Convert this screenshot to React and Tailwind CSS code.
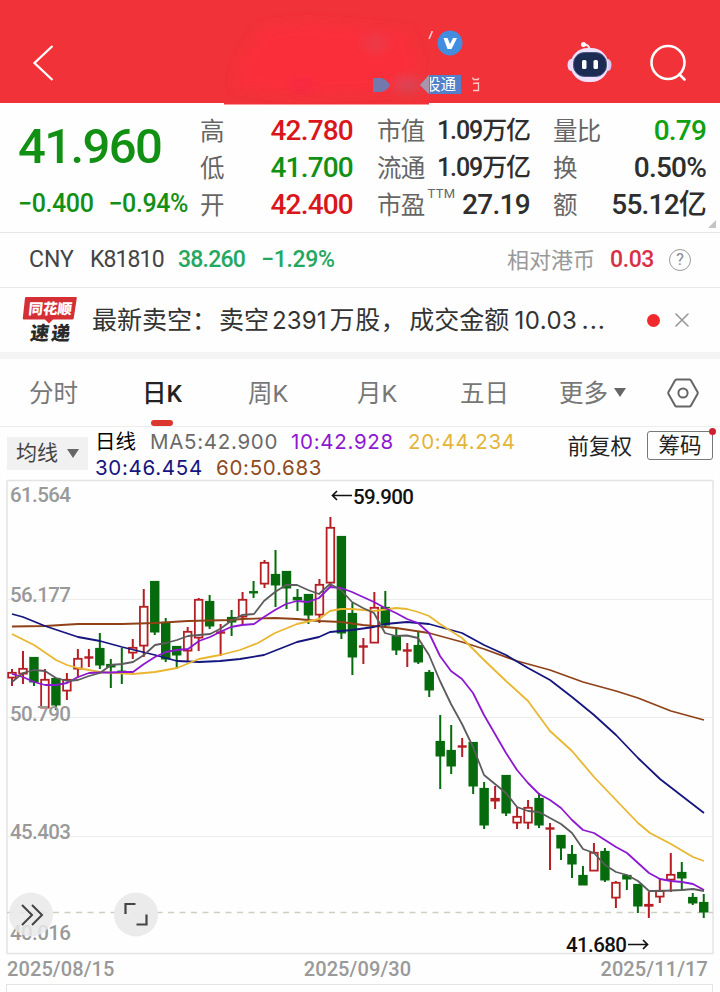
import { X } from 'lucide-react'

const UP = '#b51f24'
const DOWN = '#066b0c'

// one row per session: [rising, high, body top, body bottom, low]
const CANDLES = [
  [1, 669, 672, 678, 686], [1, 651, 668, 674, 684], [0, 657, 657, 682, 686], [1, 669, 679, 708, 708],
  [0, 678, 678, 705, 710], [1, 673, 679, 691, 700], [1, 649, 658, 669, 678], [1, 649, 657, 658, 667],
  [0, 633, 648, 665, 669], [0, 659, 664, 667, 688], [0, 648, 671, 672.5, 684], [1, 639, 647, 653, 659],
  [1, 589, 606, 646, 657], [0, 581, 581, 632, 635], [0, 618, 622, 659, 662], [0, 646, 646, 655, 669],
  [1, 627, 631, 651, 662], [1, 598, 599, 638, 651], [0, 595, 601, 626, 629], [1, 624, 632, 633, 656],
  [0, 610, 617, 622, 636], [1, 592, 599, 617, 625], [0, 581, 591.5, 593, 598], [1, 560, 562, 584, 588],
  [0, 550, 574, 585, 607], [0, 571, 571, 588, 609], [0, 589, 597, 600, 611], [0, 594, 594, 615, 624],
  [1, 579, 584, 615, 623], [1, 517, 527, 583, 588], [0, 536, 536, 633, 639], [0, 603, 613, 657, 675],
  [1, 638, 646, 647, 664], [1, 592, 607, 643, 643], [0, 591, 607, 625, 627], [0, 628, 636, 650, 655],
  [1, 643, 650, 651, 667], [0, 631, 645, 662, 664], [0, 670, 672, 690, 697], [0, 715, 741, 756, 789],
  [0, 725, 750, 766, 774], [1, 738, 746, 747, 757], [0, 742, 742, 786, 794], [0, 782, 788, 825, 829],
  [1, 786, 798, 801, 809], [0, 775, 775, 813, 816], [1, 807, 816, 823, 829], [1, 800, 807, 823, 829],
  [0, 793, 798, 825, 828], [1, 823, 828, 829, 870], [0, 835, 835, 848, 860], [0, 845, 854, 864, 878],
  [0, 866, 875, 885, 885], [1, 843, 852, 871, 871], [0, 848, 851, 880, 882], [1, 881, 882, 898, 908],
  [0, 875, 875, 879, 890], [0, 884, 884, 906, 913], [1, 892, 904, 906, 918], [1, 879, 890, 897, 903],
  [1, 853, 874, 880, 892], [0, 862, 872, 878, 890], [0, 893, 897, 903, 905], [0, 894, 902, 912, 918],
]

const LINES = [
  { color: '#8f4118', points: '12,626.5 45,626 78,624 122,624 155,623 188,621 231,620 242,619 275,618 297,619 319,621 341,622 363,625 396,628 429,633 462,642 484,649 517,661 550,670 583,682 616,691 638,698 671,711 704,720' },
  { color: '#15157f', points: '12,614 23,617 45,626 78,637 100,641 122,647 155,655 177,661 199,662 220,661 240,659 264,655 297,642 319,637 330,632 352,630 374,627 385,624 407,622 429,624 462,633 484,645 506,655 528,668 550,680 572,697 594,715 616,735 638,758 660,779 682,796 704,813' },
  { color: '#e9b62f', points: '12,634 34,645 56,660 67,665 78,668 100,672 133,674 155,672 177,668 199,659 220,655 240,650 258,643 275,633 297,624 319,619 330,611 341,609 352,609 374,611 396,608 407,609 418,612 429,616 440,624 462,638 484,660 506,681 528,701 550,731 572,751 594,777 616,800 638,823 650,833 671,844 693,857 704,861' },
  { color: '#8d18d2', points: '12,674 23,677 34,682 45,685 56,685 67,683 78,677 89,673 100,672.5 111,672.5 122,672 133,672 144,664 155,657 166,652 177,650 188,649 199,641 210,637 220,632 231,627 242,625 254,624 264,617 275,610 286,604 297,601 308,602 319,598 330,587 341,588 352,592 363,597 374,602 385,608 396,613 407,619 418,623 429,633 440,656 451,671 462,679 473,693 484,715 495,734 506,753 517,770 528,783 539,794 550,800 561,808 572,820 583,830 594,833 605,840 616,847 627,853 638,863 649,873 660,879 671,881 682,882 693,884 704,890' },
  { color: '#5c5c5c', points: '12,682 23,673 34,670 45,671 56,678 67,681 78,680 89,676 100,673 111,665 122,664 133,662 144,655 155,645 166,643 177,640 188,636 199,635 210,634 220,629 231,621 242,615 254,614 264,601 275,592 286,585 297,585 308,590 319,594 330,584 341,590 352,602 363,608 374,613 385,633 396,636 407,635.5 418,638 429,655 440,681 451,704 462,724 473,747 484,775 495,784 506,793 517,807 528,811 539,812 550,818 561,824 572,833 583,849 594,853 605,865 616,872 627,875 638,881 649,891 660,891 671,890.5 682,890 693,889 704,891' },
]

const AXIS = [['61.564', 502], ['56.177', 602], ['50.790', 721], ['45.403', 839], ['40.016', 940]]

function Robot() {
  return (
    <svg width="46" height="44" viewBox="0 0 46 44">
      <path d="M17 4c3-1 5 1 6 5" fill="none" stroke="#ffe0e6" strokeWidth="2"/>
      <circle cx="16.500" cy="3.500" r="2.500" fill="#fff"/>
      <ellipse cx="4" cy="24" rx="3.500" ry="6" fill="#eedcf8"/>
      <ellipse cx="41" cy="24" rx="3.500" ry="6" fill="#d5c9f6"/>
      <rect x="3.500" y="7" width="38" height="34" rx="17" fill="#efe0fb"/>
      <rect x="6.500" y="11.500" width="33" height="24" rx="11" fill="#1c2b52" stroke="#475484"/>
      <rect x="15" y="19" width="4.500" height="9" rx="1.500" fill="#fff"/>
      <rect x="26.500" y="19" width="4.500" height="9" rx="1.500" fill="#fff"/>
    </svg>
  )
}

function Header() {
  return (
    <header className="relative h-[103px] bg-[#f13238] flex items-center pt-[22px] pl-[32px]">
      <svg width="24" height="40" viewBox="0 0 24 40" fill="none" stroke="#fff" strokeWidth="2.300">
        <path d="M20.500 3L2.500 20l18 17"/>
      </svg>
      {/* smudged title area */}
      <svg className="absolute left-0 top-0" width="500" height="106" viewBox="0 0 500 106">
        <defs><filter id="soft" x="-20%" y="-20%" width="140%" height="140%"><feGaussianBlur stdDeviation="6"/></filter></defs>
        <rect x="224" y="99" width="205" height="5.500" fill="#f13238"/>
        <g filter="url(#soft)">
          <path d="M262 28l45-5 100 8 12 31-10 28-110 5-65-8 8-30z" fill="#fa2d3b"/>
          <ellipse cx="376" cy="43" rx="12" ry="9" fill="#e04555" opacity=".6"/>
          <ellipse cx="302" cy="86" rx="14" ry="5" fill="#f3274a" opacity=".7"/>
          <ellipse cx="408" cy="85" rx="14" ry="6" fill="#c85068" opacity=".8"/>
        </g>
        <path d="M373 78h9q5 2 8 7-3 6-9 7h-8z" fill="#7379ad"/>
        <path d="M420 85l9-10h32v19h-32z" fill="#5380cb"/>
        <path d="M420 85l9-10v19z" fill="#a995ad"/>
        <path d="M431 32l1 0-3 7" stroke="#ffd4d4" strokeWidth="1.500" fill="none"/>
        <circle cx="450" cy="43" r="12.500" fill="#438de0"/>
        <path d="M443.500 38h4l2.500 6 3-6h4l-5.500 11h-4z" fill="#fff"/>
        <clipPath id="tag"><rect x="430" y="74" width="31" height="21"/></clipPath>
        <text x="425" y="90" clipPath="url(#tag)" fill="#fff" fontSize="15.500">股通</text>
        <path d="M472.500 77.500l1 2h4.500l1-1.500M473 83.500l5.500-.5v7.500h-5.500" stroke="#ffc8c8" strokeWidth="1.300" fill="none"/>
      </svg>
      <div className="ml-auto flex items-center gap-[35px] pr-[32px]">
        <Robot/>
        <svg width="40" height="40" viewBox="0 0 40 40" fill="none" stroke="#fff" strokeWidth="2.600" strokeLinecap="round">
          <circle cx="20" cy="19.500" r="16.500"/>
          <path d="M31.500 31.500l5 5"/>
        </svg>
      </div>
    </header>
  )
}

function Stat({ label, sup, children, className = 'text-[#2e2e2e]' }) {
  return (
    <div className="h-[37px] flex items-center justify-between">
      <span className="pt-[3px] text-[24.5px] text-[#666] whitespace-nowrap flex items-start">
        {label}{sup && <span className="text-[13px] leading-none ml-[3px] -mt-[1px] tracking-[0.3px]">{sup}</span>}
      </span>
      <span className={`font-medium whitespace-nowrap ${className}`}>{children}</span>
    </div>
  )
}

function Quote() {
  return (
    <section className="relative h-[130px] border-b border-[#e6e6e6] flex pt-[9px]">
      <div className="w-[200px] pl-[18px] text-[#129013]">
        <div className="text-[49px] leading-[70px] font-medium tracking-[-1.6px]">41.960</div>
        <div className="flex gap-[15px] text-[25px] leading-[43px] font-medium tracking-[-0.4px] whitespace-nowrap">
          <span>−0.400</span><span>−0.94%</span>
        </div>
      </div>
      <div className="w-[153px] text-[28px] tracking-[-0.8px]">
        <Stat label="高" className="text-[#d9161b]">42.780</Stat>
        <Stat label="低" className="text-[#129013]">41.700</Stat>
        <Stat label="开" className="text-[#d9161b]">42.400</Stat>
      </div>
      <div className="w-[153px] ml-[24px] tracking-[-0.7px]">
        <Stat label="市值" className="text-[#2e2e2e] text-[25px] tracking-[-1.1px]">1.09万亿</Stat>
        <Stat label="流通" className="text-[#2e2e2e] text-[25px] tracking-[-1.1px]">1.09万亿</Stat>
        <Stat label="市盈" sup="TTM" className="text-[#2e2e2e] text-[28px]">27.19</Stat>
      </div>
      <div className="w-[153px] ml-[23px] text-[28px] tracking-[-0.8px]">
        <Stat label="量比" className="text-[#10a010]">0.79</Stat>
        <Stat label="换">0.50%</Stat>
        <Stat label="额">55.12亿</Stat>
      </div>
      <svg className="absolute right-[4px] bottom-[4px]" width="8" height="8"><path d="M8 0v8H0z" fill="#c4c4c4"/></svg>
    </section>
  )
}

function CnyRow() {
  return (
    <div className="h-[55px] border-b border-[#e9e9e9] flex items-center pl-[29px] pr-[29px] text-[23px] whitespace-nowrap text-[#444]">
      <span className="w-[61px]">CNY</span>
      <span className="w-[88px] tracking-[-0.9px]">K81810</span>
      <span className="w-[83px] text-[#24a761] font-medium tracking-[-0.8px]">38.260</span>
      <span className="text-[#24a761] font-medium tracking-[-0.3px]">−1.29%</span>
      <span className="ml-auto text-[22px] text-[#999]">相对港币</span>
      <span className="ml-[15px] text-[#d93047] font-medium tracking-[-0.4px]">0.03</span>
      <span className="ml-[15px] size-[22px] rounded-full border-[1.5px] border-[#999] text-[#888] text-[16px] flex items-center justify-center">?</span>
    </div>
  )
}

function News() {
  return (
    <div className="h-[71px] border-b-[7px] border-[#f4f4f4] flex items-center pl-[22px] pr-[26px]">
      <svg width="56" height="50" viewBox="0 0 56 50" fontWeight="900">
        <path d="M4 2h50q1 0 .8 1l-3 20q-.2 1.500-1.600 1.500H31l-4 4-4-4H2q-1.500 0-1.200-1.500L3 3q.2-1 1-1z" fill="#d52f36"/>
        <text x="8" y="19" fontSize="14.500" fill="#fff" transform="skewX(-6)">同花顺</text>
        <text x="13" y="45" fontSize="19" fill="#292929" textLength="40" transform="skewX(-7)">速递</text>
      </svg>
      <p className="ml-[14px] mt-[2px] flex items-baseline text-[25px] text-[#333] whitespace-nowrap">
        <span>最新卖空：</span><span className="ml-[2px]">卖空</span>
        <span className="font-['Inter'] text-[24px] mx-[3px] tracking-[0.1px]">2391</span>
        <span className="tracking-[0.6px]">万股，</span><span className="ml-[3px]">成交金额</span>
        <span className="font-['Inter'] text-[24px] ml-[5px] tracking-[0.5px]">10.03</span>
        <span className="font-['Inter'] ml-[4px] tracking-[1px]">...</span>
      </p>
      <i className="ml-auto size-[13px] rounded-full bg-[#ef2a2f]"/>
      <X size={24} strokeWidth={1.6} className="ml-[10px] text-[#999]"/>
    </div>
  )
}

function Tabs() {
  return (
    <nav className="h-[68px] border-b border-[#ededed] flex items-center pl-[29px] pr-[21px] text-[24.5px] text-[#777] whitespace-nowrap">
      <span className="w-[113px] pt-[4px]">分时</span>
      <span className="relative w-[106px] h-full pt-[4px] flex items-center font-medium text-[#222]">
        日K<i className="absolute left-[9px] bottom-0 w-[22px] h-[6px] rounded-full bg-[#dc372f]"/>
      </span>
      <span className="w-[109px] pt-[4px]">周K</span>
      <span className="w-[103px] pt-[4px]">月K</span>
      <span className="w-[99px] pt-[4px]">五日</span>
      <span className="flex items-center gap-[6px] pt-[4px]">更多<svg width="12" height="13"><path d="M0 0h12L6 9z" fill="#666"/></svg></span>
      <svg className="ml-auto" width="32" height="30" viewBox="0 0 32 30" fill="none" stroke="#666" strokeWidth="2">
        <path d="M9.500 1.500h13q1 0 1.500 1L30.500 14q.5 1 0 2L24 27.500q-.5 1-1.500 1h-13q-1 0-1.500-1L1.500 16q-.5-1 0-2L8 2.500q.5-1 1.500-1z"/>
        <circle cx="16" cy="15" r="4.600"/>
      </svg>
    </nav>
  )
}

function Legend() {
  return (
    <div className="h-[53px] flex items-start pl-[7px] pr-[7px] text-[20.5px] whitespace-nowrap">
      <div className="mt-[10px] w-[81px] h-[33px] bg-[#f1f1f1] text-[#444] text-[21px] flex items-center justify-center gap-[9px]">
        均线<svg width="12" height="9"><path d="M0 0h12L6 9z" fill="#666"/></svg>
      </div>
      <div className="ml-[7px] mt-[2px] font-['Inter','Noto_Sans_CJK_SC',sans-serif]">
        <div className="flex h-[26px] items-center">
          <span className="w-[55px] text-black text-[20.5px]">日线</span>
          <span className="w-[141px] text-[#6a6a6a] tracking-[0.7px]">MA5:42.900</span>
          <span className="w-[117px] text-[#8d18d2] tracking-[0.7px]">10:42.928</span>
          <span className="text-[#e3b53a] tracking-[0.7px]">20:44.234</span>
        </div>
        <div className="flex h-[26px] items-center">
          <span className="w-[121px] text-[#15157f] tracking-[0.7px]">30:46.454</span>
          <span className="text-[#8f4a20] tracking-[0.7px]">60:50.683</span>
        </div>
      </div>
      <span className="ml-auto mt-[4px] text-[21.5px] text-[#222]">前复权</span>
      <span className="relative ml-[15px] mt-[4px] w-[66px] h-[29px] border border-[#777] rounded-[3px] text-[21.5px] leading-[27px] text-center text-[#222]">
        筹码<i className="absolute -right-[4px] -top-[4px] size-[7px] rounded-full bg-[#d0202d]"/>
      </span>
    </div>
  )
}

function Candle({ x, candle }) {
  const [up, high, top, bottom, low] = candle
  const color = up ? UP : DOWN
  const flat = bottom - top < 2
  return (
    <g stroke={color} strokeWidth="2" fill={up ? 'none' : color}>
      <path d={`M${x} ${high}V${top}M${x} ${bottom}V${low}`}/>
      {flat
        ? <path d={`M${x - 4.5} ${(top + bottom) / 2}h9`} strokeWidth="2.400"/>
        : <rect x={x - 3.8} y={top + 0.8} width="7.600" height={Math.max(bottom - top - 1.2, 1)} strokeWidth="1.800"/>}
    </g>
  )
}

function KChart() {
  return (
    <svg className="block overflow-visible" width="720" height="474" viewBox="0 480 720 474">
      <g stroke="#ededed">
        <rect x="7" y="480.500" width="706" height="473" fill="none" stroke="#e4e4e4" strokeWidth="1.500"/>
        <path d="M7 599.500H713M7 717.500H713M7 836.500H713"/>
      </g>
      <path d="M7 912.500H713" stroke="#cfcfc0" strokeDasharray="6 5.500" strokeWidth="1.400"/>
      {CANDLES.map((c, i) => <Candle key={i} x={12 + i * 10.98} candle={c}/>)}
      {LINES.map(l => (
        <polyline key={l.color} points={l.points} fill="none" stroke={l.color} strokeWidth="1.800" strokeLinejoin="round"/>
      ))}
      <g fill="#999" fontSize="20.500" fontWeight="500">
        {AXIS.map(([v, y]) => <text key={v} x="10" y={y} textLength="61">{v}</text>)}
      </g>
      <g fill="#111" fontSize="20.500" fontWeight="500">
        <text x="353" y="503.500" textLength="61">59.900</text>
        <text x="566" y="951.500" textLength="61">41.680</text>
      </g>
      <path d="M352 495.500H332.500M337 491l-4.500 4.500 4.500 4.500M628 944.500h19.500M643 940l4.500 4.500-4.500 4.500" fill="none" stroke="#111" strokeWidth="1.700"/>
      <circle cx="31" cy="914.500" r="22" fill="#e9e9e9" opacity=".85"/>
      <path d="M22 905l10 10-10 10M32 905l10 10-10 10" fill="none" stroke="#444" strokeWidth="2"/>
      <circle cx="136" cy="914.500" r="22" fill="#e9e9e9" opacity=".93"/>
      <path d="M125.500 914v-10h10M136.500 924.500h10v-10" fill="none" stroke="#444" strokeWidth="2.200"/>
    </svg>
  )
}

export default function App() {
  return (
    <main className="w-[720px] h-[992px] overflow-hidden bg-[#fefefe] font-['Roboto','Noto_Sans_CJK_SC',sans-serif]">
      <Header/>
      <Quote/>
      <CnyRow/>
      <News/>
      <Tabs/>
      <Legend/>
      <KChart/>
      <div className="h-[30px] flex items-center justify-between pl-[7px] pr-[12px] text-[20px] font-medium text-[#999] tracking-[0.1px]">
        <span>2025/08/15</span>
        <span>2025/09/30</span>
        <span>2025/11/17</span>
      </div>
      <div className="h-[10px] ml-[6px] mr-[7px] border-t-[1.5px] border-x-[1.5px] border-[#e4e4e4]"/>
    </main>
  )
}
